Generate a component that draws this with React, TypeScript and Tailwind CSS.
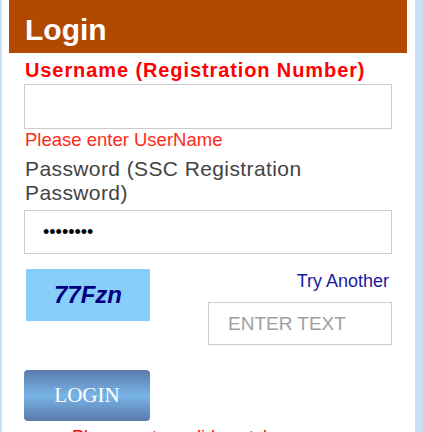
import { useState } from 'react';

export default function App() {
  const [username, setUsername] = useState('');
  const [password, setPassword] = useState('password');
  const [captcha, setCaptcha] = useState('');

  return (
    <div className="h-[432px] overflow-hidden bg-[#c9e0f4] pl-[2px] pr-[8px] font-['Liberation_Sans',Arial,sans-serif]">
      <div className="h-full bg-white px-[7px] pr-[8px]">
        <div className="flex h-[53px] items-center bg-[#b24900] pl-[16px] pt-[6px]">
          <h1 className="text-[30px] font-bold leading-none text-white">Login</h1>
        </div>

        <div className="px-[15px]">
          <label className="mt-[5px] block pl-[1px] text-[20px] font-bold leading-[25px] tracking-[0.9px] text-[#ff0000]">
            Username (Registration Number)
          </label>
          <input
            value={username}
            onChange={e => setUsername(e.target.value)}
            className="mt-[1px] block h-[45px] w-full border border-[#cccccc] px-[18px] text-[18px] outline-none"
          />
          <p className="pl-[1px] text-[18.5px] leading-[22px] text-[#ff2a1a]">Please enter UserName</p>

          <label className="mt-[6px] block pl-[1px] text-[21px] leading-[24px] tracking-[0.4px] text-[#444444]">
            Password (SSC Registration Password)
          </label>
          <input
            type="password"
            value={password}
            onChange={e => setPassword(e.target.value)}
            className="mt-[5px] block h-[44px] w-full border border-[#cccccc] px-[18px] text-[18px] text-black outline-none"
          />

          <div className="mt-[15px] flex justify-between">
            <div className="ml-[2px] flex h-[52px] w-[124px] items-center justify-center bg-[#87cefa]">
              <span className="text-[24px] font-bold italic text-[#000080]">77Fzn</span>
            </div>
            <div className="flex flex-col items-end">
              <a href="#" className="mr-[3px] text-[18px] leading-[24px] text-[#1a1a9e]">Try Another</a>
              <input
                value={captcha}
                onChange={e => setCaptcha(e.target.value)}
                placeholder="ENTER TEXT"
                className="mt-[9px] block h-[43px] w-[184px] border border-[#cccccc] px-[19px] text-[19px] outline-none placeholder:text-[#a0a0a0]"
              />
            </div>
          </div>

          <button className="mt-[25px] flex h-[51px] w-[126px] items-center justify-center rounded-[4px] bg-linear-to-b from-[#5a7aac] via-[#78b4e6] to-[#5a7aab] font-['Liberation_Serif','Times_New_Roman',serif] text-[21px] text-white">
            LOGIN
          </button>
          <p className="mt-[5px] pl-[48px] text-[18px] leading-[22px] text-[#ff0000]">Please enter valid captcha</p>
        </div>
      </div>
    </div>
  );
}
